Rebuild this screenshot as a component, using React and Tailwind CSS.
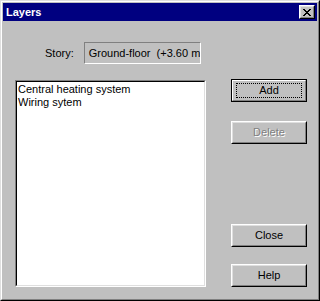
import React from 'react';

const font = { fontFamily: '"Liberation Sans", Arial, sans-serif' };

// classic 3D push button
const Button = ({ children, isDefault, disabled, className = '' }) => {
  const bevel = (
    <div className="h-full w-full border border-t-white border-l-white border-r-black border-b-black">
      <div className="h-full w-full border border-t-[#dfdfdf] border-l-[#dfdfdf] border-r-[#808080] border-b-[#808080] flex items-center justify-center">
        {isDefault ? (
          <div className="w-[66px] h-[13px] border border-dotted border-black flex items-center justify-center">
            <span className="text-[11px] leading-none text-black">{children}</span>
          </div>
        ) : (
          <span
            className={`text-[11px] leading-none ${disabled ? 'text-[#808080] [text-shadow:1px_1px_0_#fff]' : 'text-black'}`}
          >
            {children}
          </span>
        )}
      </div>
    </div>
  );

  return (
    <div className={`w-[76px] h-[23px] ${className}`}>
      {isDefault ? (
        <div className="h-full w-full border border-black">
          <div className="h-full w-full border border-t-white border-l-white border-r-[#808080] border-b-[#808080] flex items-center justify-center">
            <div className="w-[66px] h-[15px] border border-dotted border-black flex items-center justify-center">
              <span className="text-[11px] leading-none text-black">{children}</span>
            </div>
          </div>
        </div>
      ) : (
        bevel
      )}
    </div>
  );
};

const App = () => {
  const items = ['Central heating system', 'Wiring sytem'];

  return (
    <div style={font} className="w-[320px] h-[301px] bg-[#c0c0c0] select-none">
      <div className="h-full w-full border border-t-[#dfdfdf] border-l-[#dfdfdf] border-r-black border-b-black">
        <div className="h-full w-full border border-t-white border-l-white border-r-[#808080] border-b-[#808080] p-[1px] flex flex-col">
          {/* title bar */}
          <div className="h-[18px] bg-[#000080] flex items-center justify-between pl-[3px] pr-[2px]">
            <span className="text-white font-bold text-[11px] leading-none">Layers</span>
            <div className="w-[16px] h-[14px] bg-[#c0c0c0] border border-t-white border-l-white border-r-black border-b-black">
              <div className="h-full w-full border border-t-[#dfdfdf] border-l-[#dfdfdf] border-r-[#808080] border-b-[#808080] flex items-center justify-center">
                <svg width="8" height="7" viewBox="0 0 8 7" shapeRendering="crispEdges">
                  <path d="M0 0h2v1H0zM6 0h2v1H6zM1 1h2v1H1zM5 1h2v1H5zM2 2h4v1H2zM3 3h2v1H3zM2 4h4v1H2zM1 5h2v1H1zM5 5h2v1H5zM0 6h2v1H0zM6 6h2v1H6z" fill="#000" />
                </svg>
              </div>
            </div>
          </div>

          {/* body */}
          <div className="flex flex-1">
            <div className="ml-[12px] pt-[21px] w-[191px]">
              <div className="flex items-center h-[22px]">
                <span className="ml-[30px] text-[11px] text-black">Story:</span>
                <div className="ml-[10px] w-[117px] h-[22px] border border-t-[#808080] border-l-[#808080] border-r-white border-b-white overflow-hidden flex items-center pl-[4px]">
                  <span className="text-[11px] text-black whitespace-pre">Ground-floor  (+3.60 m)</span>
                </div>
              </div>

              <div className="mt-[16px] h-[207px] border border-t-[#808080] border-l-[#808080] border-r-white border-b-white">
                <div className="h-full w-full border border-t-black border-l-black border-r-[#dfdfdf] border-b-[#dfdfdf] bg-white pt-[1px]">
                  {items.map((item) => (
                    <div key={item} className="pl-[1px] text-[11px] leading-[13px] h-[13px] text-black whitespace-nowrap">
                      {item}
                    </div>
                  ))}
                </div>
              </div>
            </div>

            <div className="ml-[25px] pt-[58px] flex flex-col">
              <Button isDefault>Add</Button>
              <Button disabled className="mt-[19px]">Delete</Button>
              <Button className="mt-[80px]">Close</Button>
              <Button className="mt-[17px]">Help</Button>
            </div>
          </div>
        </div>
      </div>
    </div>
  );
};

export default App;
